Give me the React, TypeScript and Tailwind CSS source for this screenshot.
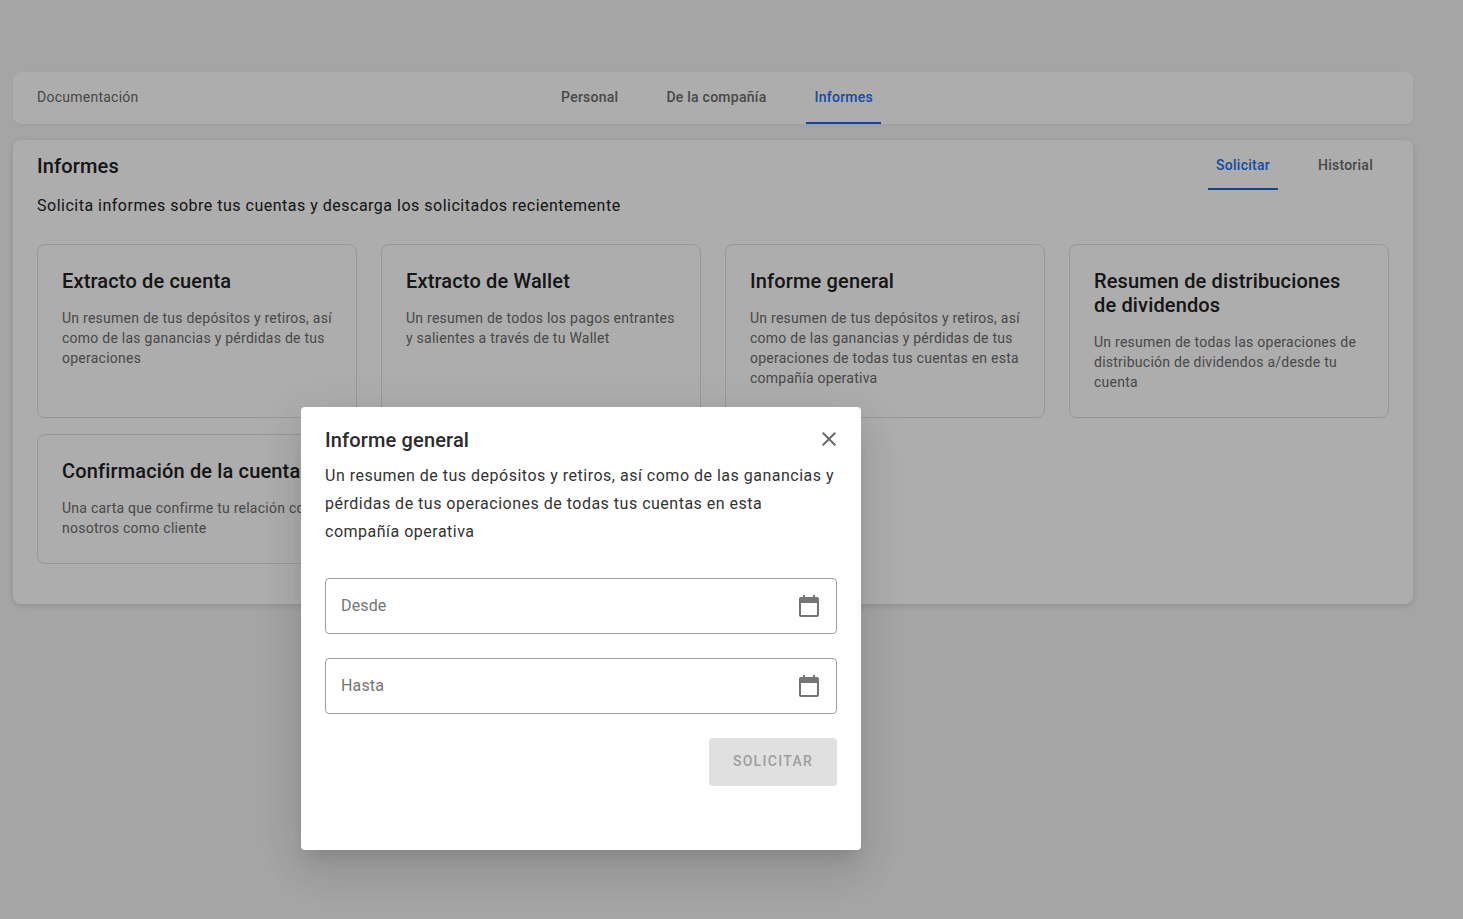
import React from "react";

const cards = [
  { t: "Extracto de cuenta", d: "Un resumen de tus depósitos y retiros, así como de las ganancias y pérdidas de tus operaciones" },
  { t: "Extracto de Wallet", d: "Un resumen de todos los pagos entrantes y salientes a través de tu Wallet" },
  { t: "Informe general", d: "Un resumen de tus depósitos y retiros, así como de las ganancias y pérdidas de tus operaciones de todas tus cuentas en esta compañía operativa" },
  { t: "Resumen de distribuciones de dividendos", d: "Un resumen de todas las operaciones de distribución de dividendos a/desde tu cuenta" },
  { t: "Confirmación de la cuenta", d: "Una carta que confirme tu relación con nosotros como cliente" },
];

function Calendar() {
  return (
    <svg width="20" height="22" viewBox="0 0 20 22" fill="#757575" fillRule="evenodd" className="shrink-0">
      <path d="M4 0h2v2h8V0h2v2h2c1.1 0 2 .9 2 2v16c0 1.1-.9 2-2 2H2c-1.1 0-2-.9-2-2V4c0-1.1.9-2 2-2h2zM2 8v12h16V8z" />
    </svg>
  );
}

function Field({ label }: { label: string }) {
  return (
    <div className="flex h-14 items-center justify-between rounded border border-[#9e9e9e] pl-[15px] pr-[17px]">
      <span className="text-base tracking-[0.15px] text-[#757575]">{label}</span>
      <Calendar />
    </div>
  );
}

export default function App() {
  return (
    <div className="relative h-[919px] overflow-hidden bg-[#f3f3f3] pl-[13px] pr-[50px] pt-[72px] font-['Roboto',sans-serif]">
      <div className="flex h-[52px] items-center rounded-lg bg-white pl-6 shadow-[0_1px_3px_rgba(0,0,0,0.06)]">
        <span className="pb-[2px] text-sm tracking-[0.25px] text-[#6b6b6b]">Documentación</span>
        <div className="ml-[414.5px] flex h-full">
          {["Personal", "De la compañía"].map((t) => (
            <div key={t} className="mr-8 flex h-full items-center border-b-2 border-transparent px-2 text-sm font-medium tracking-[0.25px] text-[#6b6b6b]">{t}</div>
          ))}
          <div className="flex h-full items-center border-b-2 border-[#1565e8] px-2 text-sm font-medium tracking-[0.25px] text-[#2470f0]">Informes</div>
        </div>
      </div>

      <div className="mt-4 h-[464px] rounded-lg bg-white px-6 shadow-[0_2px_6px_rgba(0,0,0,0.12)]">
        <div className="flex h-[50px] items-start justify-between">
          <h2 className="pt-[12px] text-xl leading-7 font-medium tracking-[0.15px] text-[#212121]">Informes</h2>
          <div className="mr-2 flex h-[50px] gap-8">
            <div className="flex items-center border-b-2 border-[#1565e8] px-2 pt-[2px] text-sm font-medium tracking-[0.25px] text-[#2470f0]">Solicitar</div>
            <div className="flex items-center px-2 text-sm font-medium tracking-[0.25px] text-[#6b6b6b]">Historial</div>
          </div>
        </div>
        <p className="mt-[2px] text-base leading-7 tracking-[0.5px] text-[#212121]">Solicita informes sobre tus cuentas y descarga los solicitados recientemente</p>
        <div className="mt-6 grid grid-cols-4 gap-x-6 gap-y-4">
          {cards.map((c, i) => (
            <div key={c.t} className={`rounded-lg border border-[#e0e0e0] px-6 pt-6 ${i < 4 ? "h-[174px]" : "h-[130px]"}`}>
              <h3 className={`text-xl leading-6 font-medium tracking-[0.15px] text-[#212121] ${i === 4 ? "whitespace-nowrap" : ""}`}>{c.t}</h3>
              <p className="mt-[15px] text-sm leading-5 tracking-[0.25px] text-[#6b6b6b]">{c.d}</p>
            </div>
          ))}
        </div>
      </div>

      <div className="absolute inset-0 bg-black/[0.32]" />

      <div className="absolute left-[301px] top-[407px] h-[443px] w-[560px] rounded bg-white px-6 pt-[19px] shadow-[0_11px_15px_-7px_rgba(0,0,0,0.1),0_24px_38px_3px_rgba(0,0,0,0.07),0_9px_46px_8px_rgba(0,0,0,0.06)]">
        <div className="flex items-start justify-between">
          <h2 className="text-xl leading-7 font-medium tracking-[0.15px] text-[#2b2b2b]">Informe general</h2>
          <svg width="24" height="24" viewBox="0 0 24 24" fill="#6b6b6b" className="-mr-1 mt-px">
            <path d="M19 6.41 17.59 5 12 10.59 6.41 5 5 6.41 10.59 12 5 17.59 6.41 19 12 13.41 17.59 19 19 17.59 13.41 12z" />
          </svg>
        </div>
        <p className="mt-2 text-base leading-7 tracking-[0.5px] text-[#333333]">
          Un resumen de tus depósitos y retiros, así como de las ganancias y pérdidas de tus operaciones de todas tus cuentas en esta compañía operativa
        </p>
        <div className="mt-8 flex flex-col gap-6">
          <Field label="Desde" />
          <Field label="Hasta" />
        </div>
        <div className="mt-6 flex justify-end">
          <div className="flex h-12 w-32 items-center justify-center rounded bg-[#e0e0e0] pb-[2px] text-sm font-medium tracking-[1.3px] text-[#9e9e9e]">SOLICITAR</div>
        </div>
      </div>
    </div>
  );
}
